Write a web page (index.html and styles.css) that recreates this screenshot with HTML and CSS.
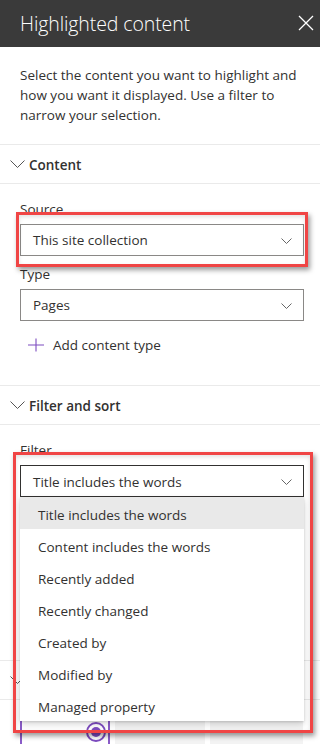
FILE: index.html
```html
<!DOCTYPE html>
<html lang="en">
<head>
<meta charset="utf-8">
<title>Highlighted content</title>
<link rel="stylesheet" href="styles.css">
</head>
<body>
<div class="panel">
  <header class="header">
    <h1 class="title">Highlighted content</h1>
    <button class="close" aria-label="Close">
      <svg width="16" height="16" viewBox="0 0 16 16"><path d="M1 1 L15 15 M15 1 L1 15" stroke="#fff" stroke-width="1.3" fill="none"/></svg>
    </button>
  </header>

  <p class="desc">Select the content you want to highlight and how you want it displayed. Use a filter to narrow your selection.</p>

  <section class="group">
    <div class="group-head">
      <svg class="chev" width="15" height="8" viewBox="0 0 15 8"><path d="M0.5 0.5 L7.5 7.5 L14.5 0.5" stroke="#555" stroke-width="1" fill="none"/></svg>
      <span>Content</span>
    </div>
    <div class="group-body content-body">
      <div class="field">
        <label class="label">Source</label>
        <div class="dropdown">
          <span>This site collection</span>
          <svg class="dd-chev" width="11" height="6" viewBox="0 0 11 6"><path d="M0.5 0.5 L5.5 5.5 L10.5 0.5" stroke="#666" stroke-width="1" fill="none"/></svg>
        </div>
      </div>
      <div class="field">
        <label class="label">Type</label>
        <div class="dropdown">
          <span>Pages</span>
          <svg class="dd-chev" width="11" height="6" viewBox="0 0 11 6"><path d="M0.5 0.5 L5.5 5.5 L10.5 0.5" stroke="#666" stroke-width="1" fill="none"/></svg>
        </div>
      </div>
      <div class="add-btn">
        <svg width="16" height="16" viewBox="0 0 16 16"><path d="M0 8 H16 M8 1.5 V14.5" stroke="#7d4cc0" stroke-width="1.1" fill="none"/></svg>
        <span>Add content type</span>
      </div>
    </div>
  </section>

  <section class="group">
    <div class="group-head">
      <svg class="chev" width="15" height="8" viewBox="0 0 15 8"><path d="M0.5 0.5 L7.5 7.5 L14.5 0.5" stroke="#555" stroke-width="1" fill="none"/></svg>
      <span>Filter and sort</span>
    </div>
    <div class="group-body filter-body">
      <div class="field filter-field">
        <label class="label">Filter</label>
        <div class="dropdown open">
          <span>Title includes the words</span>
          <svg class="dd-chev" width="11" height="6" viewBox="0 0 11 6"><path d="M0.5 0.5 L5.5 5.5 L10.5 0.5" stroke="#666" stroke-width="1" fill="none"/></svg>
        </div>
        <ul class="menu">
          <li class="item selected">Title includes the words</li>
          <li class="item">Content includes the words</li>
          <li class="item">Recently added</li>
          <li class="item">Recently changed</li>
          <li class="item">Created by</li>
          <li class="item">Modified by</li>
          <li class="item">Managed property</li>
        </ul>
      </div>
    </div>
  </section>

  <section class="group">
    <div class="group-head">
      <svg class="chev" width="15" height="8" viewBox="0 0 15 8"><path d="M0.5 0.5 L7.5 7.5 L14.5 0.5" stroke="#555" stroke-width="1" fill="none"/></svg>
    </div>
    <div class="group-body layout-body">
      <div class="cards">
        <div class="card active"><span class="radio"></span></div>
        <div class="card"></div>
        <div class="card"></div>
      </div>
    </div>
  </section>

  <div class="mark mark-source"></div>
  <div class="mark mark-filter"></div>
</div>
</body>
</html>
```

FILE: styles.css
```css
* { box-sizing: border-box; }
html, body {
  margin: 0;
  padding: 0;
  background: #fff;
}
body {
  width: 320px;
  height: 744px;
  overflow: hidden;
  font-family: "Open Sans", "Noto Sans", sans-serif;
  font-size: 13.5px;
  color: #323130;
}
.panel {
  position: relative;
  width: 320px;
  height: 744px;
  overflow: hidden;
}
.header {
  height: 47px;
  background: #3a3a3a;
  display: flex;
  align-items: center;
  justify-content: space-between;
  padding: 0 2px 0 20px;
}
.title {
  margin: 0;
  font-weight: 300;
  font-size: 19.5px;
  color: #fff;
  letter-spacing: -0.1px;
}
.close {
  width: 24px;
  height: 24px;
  padding: 0;
  border: 0;
  background: transparent;
  display: flex;
  align-items: center;
  justify-content: center;
  margin-top: -1px;
}
.desc {
  margin: 0;
  padding: 18px 20px 19px 20px;
  line-height: 20px;
}
.group {
  border-top: 1px solid #eaeaea;
}
.group-head {
  height: 39px;
  border-bottom: 1px solid #eaeaea;
  display: flex;
  align-items: center;
  gap: 4px;
  padding: 1px 0 0 10px;
  font-weight: 600;
  font-size: 13.5px;
  color: #323130;
}
.chev { margin-top: -2px; }
.group-body {
  padding: 10px 16px 0 20px;
}
.content-body { padding-bottom: 24px; }
.filter-body { padding-bottom: 163px; }
.field { padding-bottom: 3px; }
.filter-field { padding-bottom: 0; position: relative; }
.label {
  display: block;
  padding: 5px 0;
  line-height: 20px;
}
.dropdown {
  height: 32px;
  border: 1px solid #8a8886;
  display: flex;
  align-items: center;
  justify-content: space-between;
  padding: 0 11px 0 12px;
}
.dropdown.open { border-color: #323130; padding-top: 1px; }
.dd-chev { margin-top: 1px; }
.add-btn {
  height: 32px;
  margin-top: 5px;
  display: flex;
  align-items: center;
  gap: 9px;
  padding-left: 8px;
}
.menu {
  position: absolute;
  left: 0;
  right: 0;
  top: 62px;
  margin: 0;
  padding: 0;
  list-style: none;
  background: #fff;
  box-shadow: 0 3px 7px rgba(0,0,0,0.16), 0 1px 2px rgba(0,0,0,0.12);
  z-index: 5;
}
.item {
  height: 32px;
  line-height: 28px;
  padding: 4px 0 0 18px;
}
.item.selected { background: #e9e9e9; }
.layout-body { padding-top: 12px; }
.cards {
  display: grid;
  grid-template-columns: 90px 90px 93px;
  gap: 5px;
}
.card {
  position: relative;
  height: 100px;
  background: #f3f3f3;
}
.card.active {
  background: #fff;
  border: 2px solid #8a5cc8;
}
.radio {
  position: absolute;
  top: 8px;
  right: 2px;
  width: 20px;
  height: 20px;
  border-radius: 50%;
  border: 2px solid #7d4cc0;
  background: #fff;
}
.radio::after {
  content: "";
  position: absolute;
  left: 3px;
  top: 3px;
  width: 10px;
  height: 10px;
  border-radius: 50%;
  background: #7d4cc0;
}
.mark {
  position: absolute;
  border: 3px solid #f04545;
  box-shadow: 2px 3px 5px rgba(0,0,0,0.4), inset 0 2px 4px rgba(0,0,0,0.12);
  z-index: 10;
  pointer-events: none;
}
.mark-source {
  left: 16px;
  top: 212px;
  width: 292px;
  height: 55px;
}
.mark-filter {
  left: 13px;
  top: 452px;
  width: 300px;
  height: 281px;
}
```
